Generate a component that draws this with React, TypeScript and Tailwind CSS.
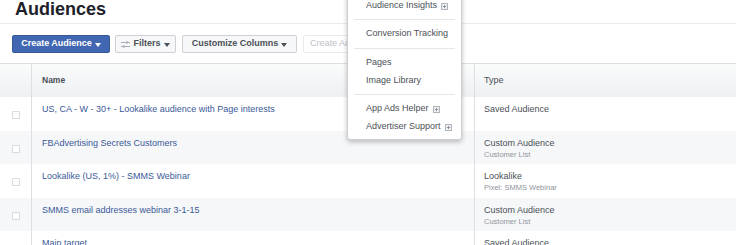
import React from "react";

const Caret = ({ color = "#4b4f56" }: { color?: string }) => (
  <svg width="6" height="4" viewBox="0 0 6 4" className="ml-[3px] mt-[1px]">
    <path d="M0 0 L6 0 L3 4 Z" fill={color} />
  </svg>
);

const PlusBox = () => (
  <svg width="7" height="7" viewBox="0 0 7 7" className="ml-[4px]">
    <rect x="0.5" y="0.5" width="6" height="6" fill="#f2f3f5" stroke="#b0b4bb" strokeWidth="1" />
    <path d="M3.5 1.8 V5.2 M1.8 3.5 H5.2" stroke="#8d949e" strokeWidth="1" />
  </svg>
);

const FilterIcon = () => (
  <svg width="9" height="7" viewBox="0 0 9 7" className="mr-[3px]">
    <path d="M0 1.5 H9 M0 5.5 H9" stroke="#a8adb5" strokeWidth="1" />
    <path d="M6 0 V3 M3 4 V7" stroke="#a8adb5" strokeWidth="1" />
  </svg>
);

const Checkbox = () => (
  <div className="w-[8px] h-[8px] border border-[#d6d9dd] bg-white rounded-[1px]" />
);

type Row = { name: string; type: string; sub?: string };

const rows: Row[] = [
  { name: "US, CA - W - 30+ - Lookalike audience with Page interests", type: "Saved Audience" },
  { name: "FBAdvertising Secrets Customers", type: "Custom Audience", sub: "Customer List" },
  { name: "Lookalike (US, 1%) - SMMS Webinar", type: "Lookalike", sub: "Pixel: SMMS Webinar" },
  { name: "SMMS email addresses webinar 3-1-15", type: "Custom Audience", sub: "Customer List" },
  { name: "Main target", type: "Saved Audience" },
];

const MenuItem = ({ label, plus }: { label: string; plus?: boolean }) => (
  <div className="h-[18px] flex items-center pl-[18px] text-[9px] text-[#4b4f56]">
    <span>{label}</span>
    {plus && <PlusBox />}
  </div>
);

const Sep = ({ mt, mb }: { mt: string; mb: string }) => (
  <div className={`mx-[6px] h-px bg-[#e5e6e9] ${mt} ${mb}`} />
);

export default function App() {
  return (
    <div
      className="relative w-[736px] h-[245px] overflow-hidden bg-white"
      style={{ fontFamily: '"Liberation Sans", Arial, sans-serif' }}
    >
      <div className="h-[24px] border-b border-[#e9ebee] pl-[15px]">
        <div className="text-[18px] leading-[18px] font-bold text-[#1d2129]">Audiences</div>
      </div>

      <div className="flex items-center gap-[5px] pl-[12px] pt-[11px]">
        <div className="h-[18px] w-[98px] flex items-center justify-center bg-[#4267b2] border border-[#365899] rounded-[2px] text-white text-[9px] font-bold">
          Create Audience
          <Caret color="#ffffff" />
        </div>
        <div className="h-[18px] w-[61px] flex items-center justify-center bg-[#f6f7f9] border border-[#ced0d4] rounded-[2px] text-[#4b4f56] text-[9px] font-bold">
          <FilterIcon />
          Filters
          <Caret />
        </div>
        <div className="h-[18px] w-[115px] ml-[1px] flex items-center justify-center bg-[#f6f7f9] border border-[#ced0d4] rounded-[2px] text-[#4b4f56] text-[9px] font-bold">
          Customize Columns
          <Caret />
        </div>
        <div className="h-[18px] w-[80px] ml-[1px] flex items-center pl-[6px] bg-white border border-[#e9ebee] rounded-[2px] text-[#bec2c9] text-[9px]">
          Create Ad
        </div>
      </div>

      <div className="mt-[10px] border-t border-[#dddfe2]">
        <div className="grid grid-cols-[32px_443px_1fr] h-[33px] bg-gradient-to-b from-[#fafbfb] to-[#eff0f2]">
          <div className="border-r border-[#dddfe2]" />
          <div className="flex items-center pl-[10px] text-[8.5px] font-bold text-[#4b4f56] border-r border-[#dddfe2]">
            Name
          </div>
          <div className="flex items-center pl-[9px] text-[9px] text-[#4b4f56]">Type</div>
        </div>
        {rows.map((r, i) => (
          <div
            key={i}
            className={`grid grid-cols-[32px_443px_1fr] h-[33.5px] ${i % 2 === 1 ? "bg-[#f6f7f9]" : "bg-white"}`}
          >
            <div className="border-r border-[#dddfe2] flex items-center justify-center pt-[3px]">
              <Checkbox />
            </div>
            <div className="border-r border-[#dddfe2] pl-[10px] pt-[6px] text-[9px] leading-[12px] text-[#3b5998]">
              {r.name}
            </div>
            <div className="pl-[9px] pt-[6px]">
              <div className="text-[9px] leading-[12px] text-[#4b4f56]">{r.type}</div>
              {r.sub && <div className="text-[7.5px] leading-[11px] text-[#90949c]">{r.sub}</div>}
            </div>
          </div>
        ))}
      </div>

      <div className="absolute left-[347px] top-[-8px] w-[115px] bg-white border border-[#ccd0d5] rounded-b-[3px] shadow-[0_2px_5px_rgba(0,0,0,0.25)] pt-[4px] pb-[3px] z-10">
        <MenuItem label="Audience Insights" plus />
        <Sep mt="mt-[4px]" mb="mb-[5px]" />
        <MenuItem label="Conversion Tracking" />
        <Sep mt="mt-[5px]" mb="mb-[5px]" />
        <MenuItem label="Pages" />
        <MenuItem label="Image Library" />
        <Sep mt="mt-[4px]" mb="mb-[5px]" />
        <MenuItem label="App Ads Helper" plus />
        <MenuItem label="Advertiser Support" plus />
      </div>
    </div>
  );
}
